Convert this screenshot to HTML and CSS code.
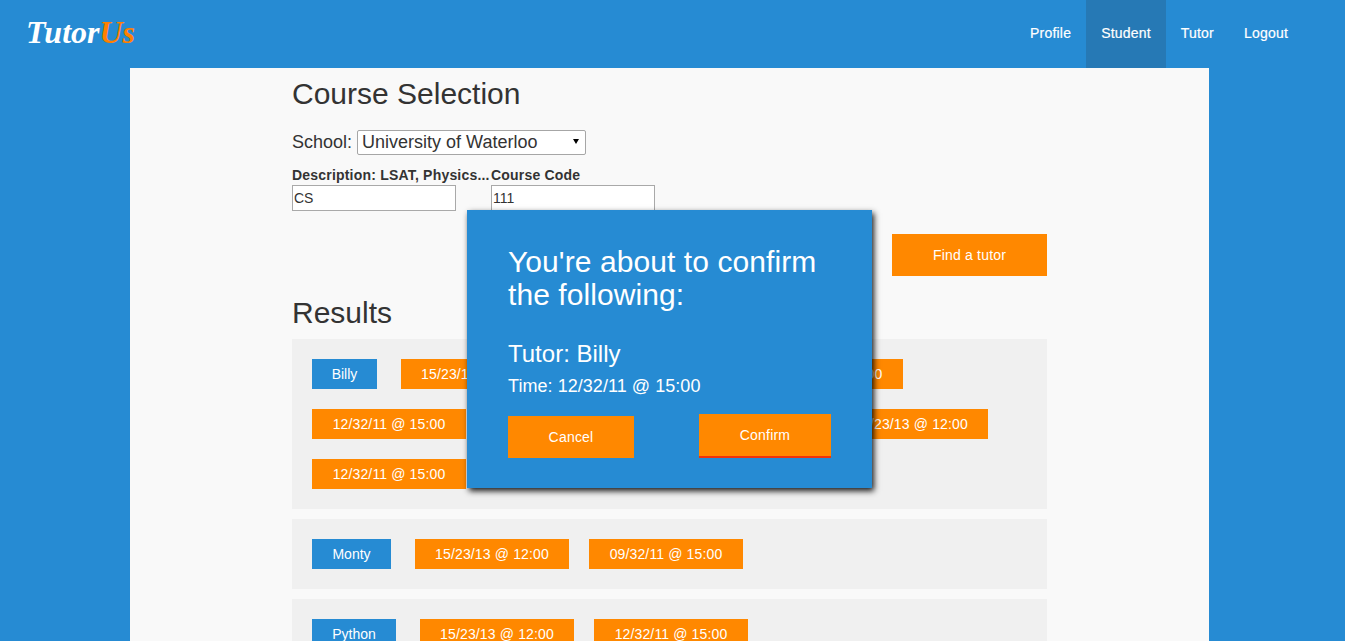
FILE: index.html
```
<!DOCTYPE html>
<html lang="en">
<head>
<meta charset="utf-8">
<title>TutorUs</title>
<link rel="stylesheet" href="styles.css">
</head>
<body>
<header class="navbar">
  <a class="logo" href="#">Tutor<span class="logo-us">Us</span></a>
  <nav class="nav">
    <a class="nav-link" href="#">Profile</a>
    <a class="nav-link active" href="#">Student</a>
    <a class="nav-link" href="#">Tutor</a>
    <a class="nav-link" href="#">Logout</a>
  </nav>
</header>
<main class="page">
  <div class="content">
    <h2 class="heading">Course Selection</h2>
    <div class="school-row">
      <label class="school-label" for="school">School:</label>
      <div class="select-wrap">
        <select class="school-select" id="school"><option>University of Waterloo</option></select>
      </div>
    </div>
    <div class="fields">
      <div class="field field-desc">
        <label class="field-label">Description: LSAT, Physics...</label>
        <input class="field-input" type="text" value="CS">
      </div>
      <div class="field">
        <label class="field-label">Course Code</label>
        <input class="field-input" type="text" value="111">
      </div>
    </div>
    <div class="find-row"><button class="btn btn-find">Find a tutor</button></div>
    <h2 class="heading heading-results">Results</h2>
    <section class="result">
      <span class="tag tag-name tag-billy">Billy</span>
      <span class="tag">15/23/13 @ 12:00</span>
      <span class="tag">09/32/11 @ 15:00</span>
      <span class="tag">12/32/11 @ 15:00</span>
      <span class="tag">12/32/11 @ 15:00</span>
      <span class="tag">15/23/13 @ 12:00</span>
      <span class="tag">09/32/11 @ 15:00</span>
      <span class="tag">15/23/13 @ 12:00</span>
      <span class="tag">12/32/11 @ 15:00</span>
    </section>
    <section class="result">
      <span class="tag tag-name tag-monty">Monty</span>
      <span class="tag">15/23/13 @ 12:00</span>
      <span class="tag">09/32/11 @ 15:00</span>
    </section>
    <section class="result">
      <span class="tag tag-name tag-python">Python</span>
      <span class="tag">15/23/13 @ 12:00</span>
      <span class="tag">12/32/11 @ 15:00</span>
    </section>
  </div>
</main>
<div class="modal">
  <h2 class="modal-title">You're about to confirm the following:</h2>
  <p class="modal-tutor">Tutor: Billy</p>
  <p class="modal-time">Time: 12/32/11 @ 15:00</p>
  <div class="modal-actions">
    <button class="btn btn-cancel">Cancel</button>
    <button class="btn btn-confirm">Confirm</button>
  </div>
</div>
</body>
</html>
```
FILE: styles.css
```
* { box-sizing: border-box; }
html, body { height: 100%; margin: 0; overflow: hidden; }
body {
  background: #268bd3;
  color: #333;
  font-family: "Liberation Sans", Arial, sans-serif;
  font-size: 14px;
}
.navbar {
  height: 68px;
  display: flex;
  justify-content: space-between;
  align-items: stretch;
  padding: 0 42px 0 26px;
}
.logo {
  align-self: center;
  color: #fff;
  font-family: "Liberation Serif", serif;
  font-style: italic;
  font-weight: 700;
  font-size: 32px;
  line-height: 40px;
  text-decoration: none;
  margin-top: -4px;
}
.logo-us { color: #ff8000; }
.nav { display: flex; }
.nav-link {
  color: #fff;
  text-decoration: none;
  padding: 0 15px;
  line-height: 66px;
  letter-spacing: 0.2px;
  -webkit-text-stroke: 0.2px #fff;
}
.nav-link.active { background: #2679b5; }
.page {
  width: 1079px;
  margin-left: 130px;
  background: #f9f9f9;
  min-height: 600px;
  padding-left: 162px;
}
.content { width: 755px; }
.heading {
  margin: 0;
  font-weight: 400;
  font-size: 30px;
  line-height: 33px;
  padding-top: 9px;
}
.school-row {
  display: flex;
  align-items: center;
  gap: 5px;
  margin-top: 20px;
  height: 25px;
}
.school-label { font-size: 18px; }
.select-wrap { position: relative; height: 25px; }
.select-wrap::after {
  content: "";
  position: absolute;
  left: 216px;
  top: 9px;
  border-left: 3px solid transparent;
  border-right: 3px solid transparent;
  border-top: 5px solid #000;
  pointer-events: none;
}
.school-select {
  appearance: none;
  -webkit-appearance: none;
  display: block;
  width: 229px;
  height: 25px;
  font: 18px "Liberation Sans", Arial, sans-serif;
  color: #333;
  background: #fff;
  border: 1px solid #a6a6a6;
  border-radius: 2px;
  padding: 0 0 2px 4px;
}
.fields { display: flex; margin-top: 12px; }
.field-desc { width: 199px; }
.field { display: flex; flex-direction: column; }
.field-label {
  font-weight: 700;
  font-size: 14px;
  line-height: 16px;
  letter-spacing: 0.2px;
  white-space: nowrap;
  margin-bottom: 2px;
}
.field-input {
  width: 164px;
  height: 26px;
  border: 1px solid #a9a9a9;
  background: #fff;
  padding: 0 1px;
  font: 14px "Liberation Sans", Arial, sans-serif;
  color: #333;
}
.find-row { display: flex; justify-content: flex-end; margin-top: 23px; }
.btn {
  border: 0;
  background: #ff8800;
  color: #fff;
  font: 14px "Liberation Sans", Arial, sans-serif;
  letter-spacing: 0.2px;
  padding: 0;
}
.btn-find { width: 155px; height: 42px; }
.heading-results { padding-top: 20px; margin-bottom: 10px; }
.result {
  display: flex;
  flex-wrap: wrap;
  gap: 20px;
  background: #f0f0f0;
  padding: 20px;
  margin-bottom: 10px;
}
.tag {
  background: #ff8800;
  color: #fff;
  font-size: 14px;
  line-height: 30px;
  height: 30px;
  width: 154px;
  text-align: center;
  white-space: nowrap;
  letter-spacing: 0.14px;
}
.tag-name { background: #268bd3; margin-right: 4px; letter-spacing: 0; }
.tag-billy { width: 65px; }
.tag-monty { width: 79px; }
.tag-python { width: 84px; }
.modal {
  position: absolute;
  left: 467px;
  top: 210px;
  width: 405px;
  height: 278px;
  background: #268bd3;
  color: #fff;
  padding: 35px 41px 30px;
  box-shadow: 2px 3px 6px rgba(0, 0, 0, 0.9);
}
.modal-title {
  margin: 0;
  font-weight: 400;
  font-size: 30px;
  line-height: 33px;
  letter-spacing: 0.08px;
}
.modal-tutor { margin: 29px 0 0; font-size: 24px; line-height: 28px; }
.modal-time { margin: 7px 0 0; font-size: 18px; line-height: 22px; letter-spacing: 0.05px; }
.modal-actions {
  display: flex;
  justify-content: space-between;
  align-items: flex-end;
  margin-top: 17px;
}
.btn-cancel { width: 126px; height: 42px; }
.btn-confirm {
  width: 132px;
  height: 44px;
  border-bottom: 2px solid #f0330a;
}
```
